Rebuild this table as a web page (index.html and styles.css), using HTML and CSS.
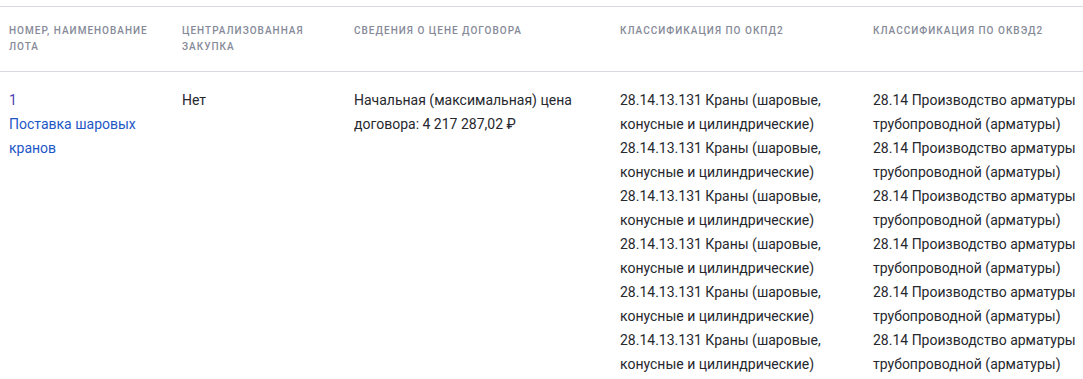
FILE: index.html
```html
<!DOCTYPE html>
<html lang="ru">
<head>
<meta charset="utf-8">
<link rel="stylesheet" href="styles.css">
</head>
<body>
<table class="lots">
  <colgroup>
    <col class="c1"><col class="c2"><col class="c3"><col class="c4"><col class="c5">
  </colgroup>
  <thead>
    <tr>
      <th>Номер, наименование лота</th>
      <th>Централизованная закупка</th>
      <th>Сведения о цене договора</th>
      <th>Классификация по ОКПД2</th>
      <th>Классификация по ОКВЭД2</th>
    </tr>
  </thead>
  <tbody>
    <tr>
      <td>
        <a class="lot-num" href="#">1</a>
        <a class="lot-name" href="#">Поставка шаровых кранов</a>
      </td>
      <td>Нет</td>
      <td>Начальная (максимальная) цена договора: 4 217 287,02 ₽</td>
      <td>
        <div class="item">28.14.13.131 Краны (шаровые, конусные и цилиндрические)</div>
        <div class="item">28.14.13.131 Краны (шаровые, конусные и цилиндрические)</div>
        <div class="item">28.14.13.131 Краны (шаровые, конусные и цилиндрические)</div>
        <div class="item">28.14.13.131 Краны (шаровые, конусные и цилиндрические)</div>
        <div class="item">28.14.13.131 Краны (шаровые, конусные и цилиндрические)</div>
        <div class="item">28.14.13.131 Краны (шаровые, конусные и цилиндрические)</div>
      </td>
      <td>
        <div class="item">28.14 Производство арматуры трубопроводной (арматуры)</div>
        <div class="item">28.14 Производство арматуры трубопроводной (арматуры)</div>
        <div class="item">28.14 Производство арматуры трубопроводной (арматуры)</div>
        <div class="item">28.14 Производство арматуры трубопроводной (арматуры)</div>
        <div class="item">28.14 Производство арматуры трубопроводной (арматуры)</div>
        <div class="item">28.14 Производство арматуры трубопроводной (арматуры)</div>
      </td>
    </tr>
  </tbody>
</table>
</body>
</html>
```
FILE: styles.css
```css
html, body {
  margin: 0;
  padding: 0;
  background: #ffffff;
}
body {
  padding-top: 6px;
  font-family: Roboto, "Liberation Sans", Arial, sans-serif;
  color: #26282e;
}
.lots {
  width: 1100px;
  border-collapse: collapse;
  table-layout: fixed;
}
.c1 { width: 173px; }
.c2 { width: 172px; }
.c3 { width: 266px; }
.c4 { width: 253px; }
.c5 { width: 236px; }
.lots thead tr {
  border-top: 1px solid #d6d8e4;
  border-bottom: 1px solid #d6d8e4;
}
.lots th {
  text-align: left;
  vertical-align: top;
  font-size: 10px;
  font-weight: 500;
  line-height: 16px;
  letter-spacing: 1px;
  text-transform: uppercase;
  color: #868a98;
  padding: 16px 6px 16px 9px;
  height: 32px;
}
.lots td {
  vertical-align: top;
  font-size: 14px;
  line-height: 24px;
  padding: 16px 12px 0 9px;
}
.lot-num {
  display: block;
  color: #4b41b4;
  text-decoration: none;
}
.lot-name {
  display: block;
  color: #1d57c6;
  text-decoration: none;
}
.item {
  display: block;
}
```
